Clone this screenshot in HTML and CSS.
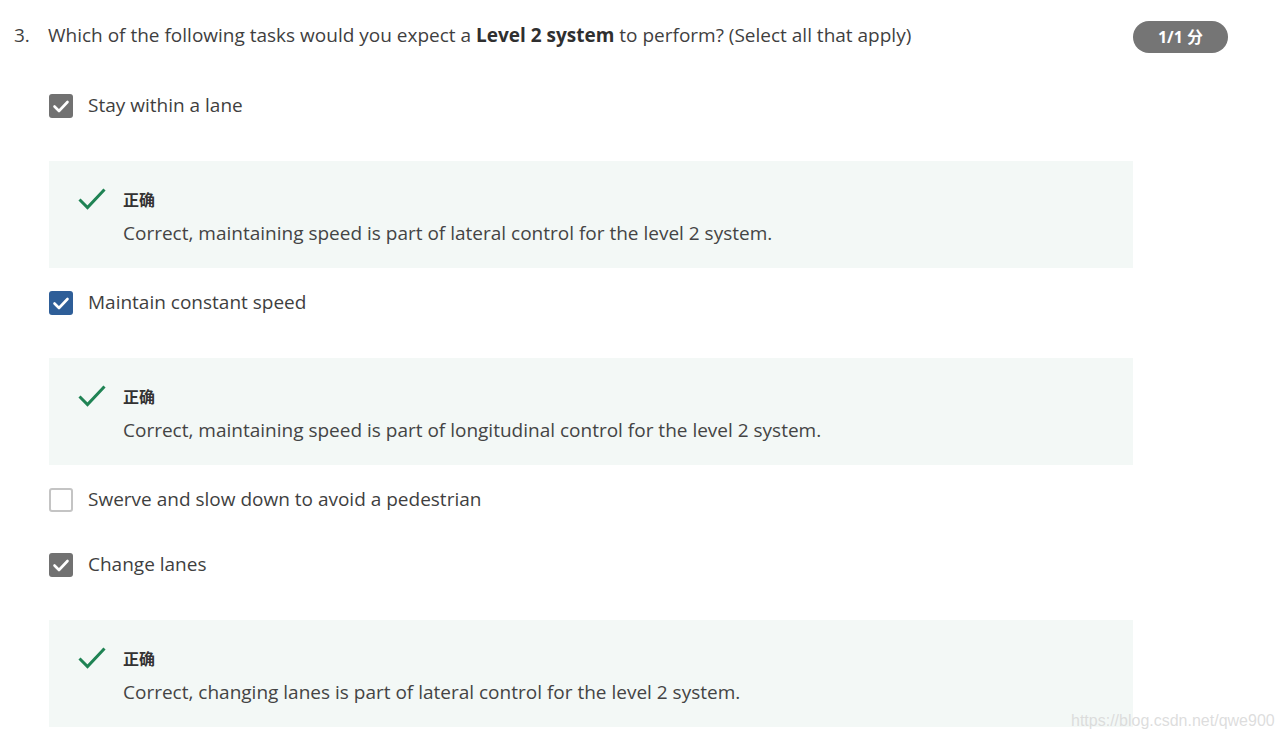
FILE: index.html
```html
<!DOCTYPE html>
<html>
<head>
<meta charset="utf-8">
<link rel="stylesheet" href="styles.css">
</head>
<body>
<div class="page">
  <div class="question">
    <span class="qnum">3.</span>
    <span class="qtext">Which of the following tasks would you expect a <b>Level 2 system</b> to perform? (Select all that apply)</span>
    <span class="badge">1/1 分</span>
  </div>
  <div class="answers">
    <div class="option">
      <span class="box checked grey"><svg viewBox="0 0 24 24" width="24" height="24"><path d="M5.5 12.5l4.5 4.5 8.5-9" fill="none" stroke="#fff" stroke-width="2.6" stroke-linecap="round" stroke-linejoin="round"/></svg></span>
      <span class="label">Stay within a lane</span>
    </div>
    <div class="feedback">
      <svg class="tick" viewBox="0 0 28 24" width="28" height="24"><path d="M1.5 12.5l8 8L26.5 2.5" fill="none" stroke="#1f8354" stroke-width="3"/></svg>
      <div class="fbody">
        <div class="ftitle">正确</div>
        <div class="ftext">Correct, maintaining speed is part of lateral control for the level 2 system.</div>
      </div>
    </div>
    <div class="option">
      <span class="box checked blue"><svg viewBox="0 0 24 24" width="24" height="24"><path d="M5.5 12.5l4.5 4.5 8.5-9" fill="none" stroke="#fff" stroke-width="2.6" stroke-linecap="round" stroke-linejoin="round"/></svg></span>
      <span class="label">Maintain constant speed</span>
    </div>
    <div class="feedback">
      <svg class="tick" viewBox="0 0 28 24" width="28" height="24"><path d="M1.5 12.5l8 8L26.5 2.5" fill="none" stroke="#1f8354" stroke-width="3"/></svg>
      <div class="fbody">
        <div class="ftitle">正确</div>
        <div class="ftext">Correct, maintaining speed is part of longitudinal control for the level 2 system.</div>
      </div>
    </div>
    <div class="option plain">
      <span class="box empty"></span>
      <span class="label">Swerve and slow down to avoid a pedestrian</span>
    </div>
    <div class="option">
      <span class="box checked grey"><svg viewBox="0 0 24 24" width="24" height="24"><path d="M5.5 12.5l4.5 4.5 8.5-9" fill="none" stroke="#fff" stroke-width="2.6" stroke-linecap="round" stroke-linejoin="round"/></svg></span>
      <span class="label">Change lanes</span>
    </div>
    <div class="feedback">
      <svg class="tick" viewBox="0 0 28 24" width="28" height="24"><path d="M1.5 12.5l8 8L26.5 2.5" fill="none" stroke="#1f8354" stroke-width="3"/></svg>
      <div class="fbody">
        <div class="ftitle">正确</div>
        <div class="ftext">Correct, changing lanes is part of lateral control for the level 2 system.</div>
      </div>
    </div>
  </div>
  <div class="watermark">https://blog.csdn.net/qwe900</div>
</div>
</body>
</html>
```
FILE: styles.css
```css
html, body {
  margin: 0;
  padding: 0;
  background: #fff;
}
body {
  font-family: "Open Sans", "Noto Sans CJK SC", sans-serif;
  color: #3f3f3f;
  font-size: 19px;
}
.page {
  position: relative;
  width: 1283px;
  height: 741px;
  overflow: hidden;
}
.question {
  display: flex;
  align-items: center;
  padding: 21px 0 0 14px;
  height: 32px;
  line-height: 24px;
}
.qnum {
  width: 34px;
  margin-top: -4px;
}
.qtext {
  flex: 1;
  margin-top: -4px;
}
.qtext b {
  font-weight: 700;
  color: #2f2f2f;
}
.badge {
  width: 95px;
  height: 32px;
  border-radius: 16px;
  background: #757575;
  color: #fff;
  font-weight: 700;
  font-size: 16px;
  display: flex;
  align-items: center;
  justify-content: center;
  margin-right: 55px;
}
.answers {
  padding: 41px 0 0 49px;
  width: 1084px;
}
.option {
  display: flex;
  align-items: center;
  height: 24px;
  margin-bottom: 43px;
}
.option.plain {
  margin-bottom: 41px;
}
.box {
  width: 24px;
  height: 24px;
  box-sizing: border-box;
  border-radius: 3px;
  flex: none;
  display: block;
}
.box svg { display: block; }
.grey { background: #717171; }
.blue { background: #2e5e98; }
.empty {
  border: 2px solid #c4c4c4;
  background: #fff;
}
.label {
  margin-left: 15px;
  line-height: 24px;
  margin-top: -3px;
}
.feedback {
  background: #f3f8f6;
  display: flex;
  align-items: flex-start;
  padding: 26px 0 22px 29px;
  margin-bottom: 23px;
  height: 59px;
}
.tick {
  flex: none;
  display: block;
}
.fbody {
  margin-left: 17px;
}
.ftitle {
  font-family: "Noto Sans CJK SC", sans-serif;
  font-weight: 700;
  font-size: 16px;
  line-height: 24px;
  color: #333;
}
.ftext {
  margin-top: 10px;
  line-height: 24px;
  color: #444;
}
.watermark {
  position: absolute;
  left: 1071px;
  top: 712px;
  font-family: "Liberation Sans", Arial, sans-serif;
  font-size: 16px;
  color: rgba(215, 215, 215, 0.85);
}
```
